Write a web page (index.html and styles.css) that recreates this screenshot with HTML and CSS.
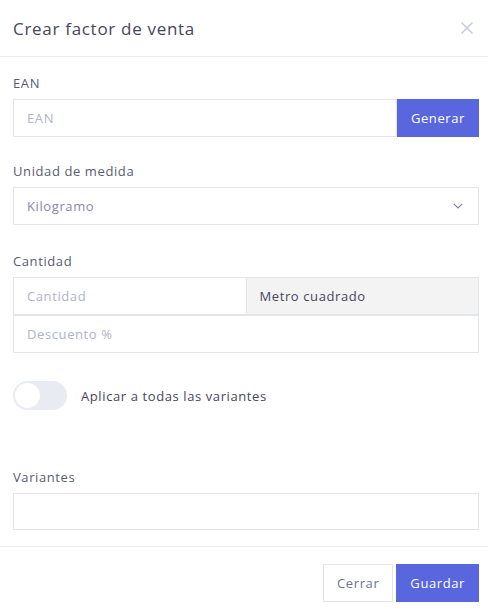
FILE: index.html
```html
<!DOCTYPE html>
<html lang="es">
<head>
  <meta charset="UTF-8" />
  <meta name="viewport" content="width=device-width, initial-scale=1.0" />
  <title>Crear factor de venta</title>
  <link rel="stylesheet" href="styles.css">
</head>
<body>
  <div class="modal">
    <div class="modal-header">
      <h5 class="modal-title">Crear factor de venta</h5>
      <button class="close" type="button" aria-label="Cerrar">
        <svg width="12" height="12" viewBox="0 0 12 12">
          <path d="M1 1L11 11M11 1L1 11" stroke="#c9cbdb" stroke-width="1.6" stroke-linecap="round" />
        </svg>
      </button>
    </div>

    <div class="modal-body">
      <div class="form-group">
        <label>EAN</label>
        <div class="input-group">
          <input class="form-control" type="text" placeholder="EAN">
          <button class="btn btn-primary" type="button">Generar</button>
        </div>
      </div>

      <div class="form-group">
        <label>Unidad de medida</label>
        <div class="select">
          <span>Kilogramo</span>
          <svg width="10" height="6" viewBox="0 0 10 6">
            <path d="M0.8 0.8L5 5L9.2 0.8" fill="none" stroke="#7c80a0" stroke-width="1.1" />
          </svg>
        </div>
      </div>

      <div class="form-group qty">
        <label>Cantidad</label>
        <div class="input-group">
          <input class="form-control" type="text" placeholder="Cantidad">
          <span class="addon">Metro cuadrado</span>
        </div>
        <input class="form-control stacked" type="text" placeholder="Descuento %">
      </div>

      <div class="switch-row">
        <span class="switch"><span class="knob"></span></span>
        <span class="switch-label">Aplicar a todas las variantes</span>
      </div>

      <div class="form-group last">
        <label>Variantes</label>
        <div class="form-control box"></div>
      </div>
    </div>

    <div class="modal-footer">
      <button class="btn btn-secondary" type="button">Cerrar</button>
      <button class="btn btn-primary" type="button">Guardar</button>
    </div>
  </div>
</body>
</html>
```

FILE: styles.css
```css
body {
  margin: 0;
  font-family: 'Open Sans', 'Noto Sans', sans-serif;
  font-size: 13px;
  letter-spacing: 0.6px;
  color: #646c9a;
  background: #fff;
}

.modal {
  width: 488px;
}

.modal-header {
  display: flex;
  align-items: center;
  justify-content: space-between;
  height: 56px;
  padding: 0 13px;
  border-bottom: 1px solid #ebedf2;
}

.modal-title {
  margin: 0;
  font-size: 17px;
  font-weight: 500;
  letter-spacing: 0.7px;
  color: #48465b;
}

.close {
  border: 0;
  background: none;
  padding: 0;
  margin-right: 2px;
  display: flex;
}

.modal-body {
  padding: 16px 9px 16px 13px;
}

.form-group {
  margin-bottom: 24px;
}

.form-group.qty {
  margin-top: 26px;
}

.form-group.last {
  margin-bottom: 0;
}

label {
  display: block;
  line-height: 20px;
  margin-bottom: 6px;
  color: #595d6e;
}

.form-control {
  box-sizing: border-box;
  width: 100%;
  height: 38px;
  padding: 0 13px;
  border: 1px solid #e2e5ec;
  font-family: inherit;
  font-size: 13px;
  letter-spacing: inherit;
  color: #495057;
  background: #fff;
  outline: none;
}

.form-control::placeholder {
  color: #b0b3c7;
}

.form-control.stacked {
  display: block;
}

.form-control.box {
  height: 37px;
}

.input-group {
  display: flex;
}

.input-group .form-control {
  flex: 1;
  min-width: 0;
}

.addon {
  box-sizing: border-box;
  flex: 1;
  display: flex;
  align-items: center;
  height: 38px;
  padding: 0 13px;
  background: #f3f3f4;
  border: 1px solid #e2e5ec;
  border-left: 0;
  color: #48465b;
}

.select {
  box-sizing: border-box;
  display: flex;
  align-items: center;
  justify-content: space-between;
  height: 38px;
  padding: 0 15px 0 13px;
  border: 1px solid #e2e5ec;
  color: #868aa8;
}

.btn {
  box-sizing: border-box;
  height: 38px;
  padding: 0 13px;
  border: 1px solid transparent;
  font-family: inherit;
  font-size: 13px;
  letter-spacing: inherit;
  cursor: pointer;
}

.btn-primary {
  background: #5867dd;
  border-color: #5867dd;
  color: #fff;
}

.btn-secondary {
  background: #fff;
  border-color: #e2e5ec;
  color: #6c7293;
}

.switch-row {
  display: flex;
  align-items: center;
  gap: 14px;
  margin-top: 28px;
  margin-bottom: 57px;
}

.switch {
  box-sizing: border-box;
  width: 54px;
  height: 29px;
  padding: 2px;
  border-radius: 15px;
  background: #e8ebf1;
  display: flex;
  align-items: center;
}

.knob {
  width: 25px;
  height: 25px;
  border-radius: 50%;
  background: #fff;
}

.switch-label {
  color: #48465b;
}

.modal-footer {
  display: flex;
  justify-content: flex-end;
  gap: 3px;
  padding: 17px 9px 13px 13px;
  border-top: 1px solid #ebedf2;
}
```
